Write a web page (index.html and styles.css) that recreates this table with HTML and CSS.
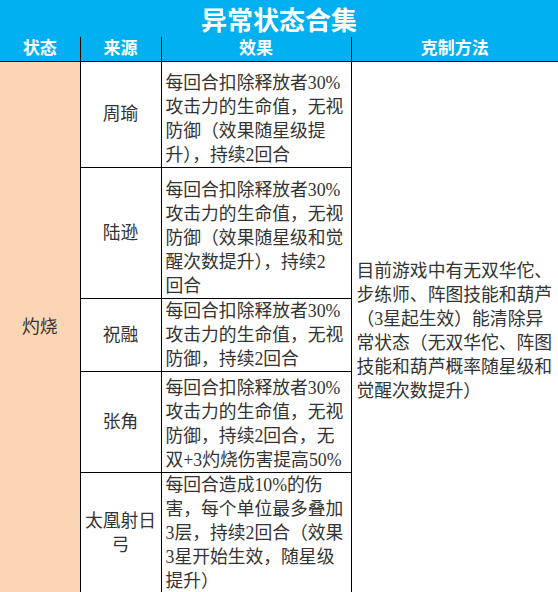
FILE: index.html
```html
<!DOCTYPE html>
<html lang="zh-CN">
<head>
<meta charset="utf-8">
<title>异常状态合集</title>
<link rel="stylesheet" href="styles.css">
</head>
<body>
<div class="sheet">
  <div class="title">异常状态合集</div>
  <table class="grid">
    <colgroup>
      <col class="c-state">
      <col class="c-src">
      <col class="c-eff">
      <col class="c-fix">
    </colgroup>
    <thead>
      <tr class="head">
        <th class="first">状态</th>
        <th>来源</th>
        <th>效果</th>
        <th>克制方法</th>
      </tr>
    </thead>
    <tbody>
      <tr class="r1">
        <td class="state first" rowspan="5">灼烧</td>
        <td class="src">周瑜</td>
        <td class="eff">每回合扣除释放者30%<br>攻击力的生命值，无视<br>防御（效果随星级提<br>升），持续2回合</td>
        <td class="fix" rowspan="5">目前游戏中有无双华佗、<br>步练师、阵图技能和葫芦<br>（3星起生效）能清除异<br>常状态（无双华佗、阵图<br>技能和葫芦概率随星级和<br>觉醒次数提升）</td>
      </tr>
      <tr class="r2">
        <td class="src">陆逊</td>
        <td class="eff">每回合扣除释放者30%<br>攻击力的生命值，无视<br>防御（效果随星级和觉<br>醒次数提升），持续2<br>回合</td>
      </tr>
      <tr class="r3">
        <td class="src">祝融</td>
        <td class="eff">每回合扣除释放者30%<br>攻击力的生命值，无视<br>防御，持续2回合</td>
      </tr>
      <tr class="r4">
        <td class="src">张角</td>
        <td class="eff">每回合扣除释放者30%<br>攻击力的生命值，无视<br>防御，持续2回合，无<br>双+3灼烧伤害提高50%</td>
      </tr>
      <tr class="r5">
        <td class="src">太凰射日<br>弓</td>
        <td class="eff">每回合造成10%的伤<br>害，每个单位最多叠加<br>3层，持续2回合（效果<br>3星开始生效，随星级<br>提升）</td>
      </tr>
    </tbody>
  </table>
</div>
</body>
</html>
```

FILE: styles.css
```css
html, body {
  margin: 0;
  padding: 0;
  background: #ffffff;
}

.sheet {
  width: 558px;
  font-family: "Liberation Serif", "Noto Sans CJK SC", serif;
  color: #333333;
}

.title {
  box-sizing: border-box;
  height: 37px;
  padding-top: 1px;
  line-height: 36px;
  background: #00b0f0;
  color: #ffffff;
  text-align: center;
  font-family: "Noto Sans CJK SC", sans-serif;
  font-weight: 700;
  font-size: 26px;
}

.grid {
  width: 558px;
  table-layout: fixed;
  border-collapse: collapse;
  border-spacing: 0;
}

.c-state { width: 80px; }
.c-src { width: 81px; }
.c-eff { width: 190px; }
.c-fix { width: 207px; }

.grid th,
.grid td {
  border: 1px solid #000000;
  padding: 0;
  font-size: 17.8px;
  line-height: 24px;
  white-space: nowrap;
  overflow: hidden;
}

.grid .first {
  border-left: none;
}

.grid th:last-child,
.grid td.fix {
  border-right: none;
}

.grid .head {
  height: 24px;
}

.grid .head th {
  background: #00b0f0;
  color: #ffffff;
  font-weight: 700;
  font-size: 17px;
  line-height: 22px;
  text-align: center;
  vertical-align: middle;
  border-top: none;
}

.r1 { height: 106px; }
.r2 { height: 131px; }
.r3 { height: 72px; }
.r4 { height: 101px; }
.r5 { height: 120px; }

.grid .state {
  background: #fcd5b4;
  text-align: center;
  vertical-align: middle;
}

.grid .src {
  text-align: center;
  vertical-align: middle;
}

.grid .eff {
  text-align: left;
  vertical-align: bottom;
  padding: 0 0 0 4px;
}

.grid .fix {
  text-align: left;
  vertical-align: middle;
  padding: 8px 0 0 5px;
}
```
